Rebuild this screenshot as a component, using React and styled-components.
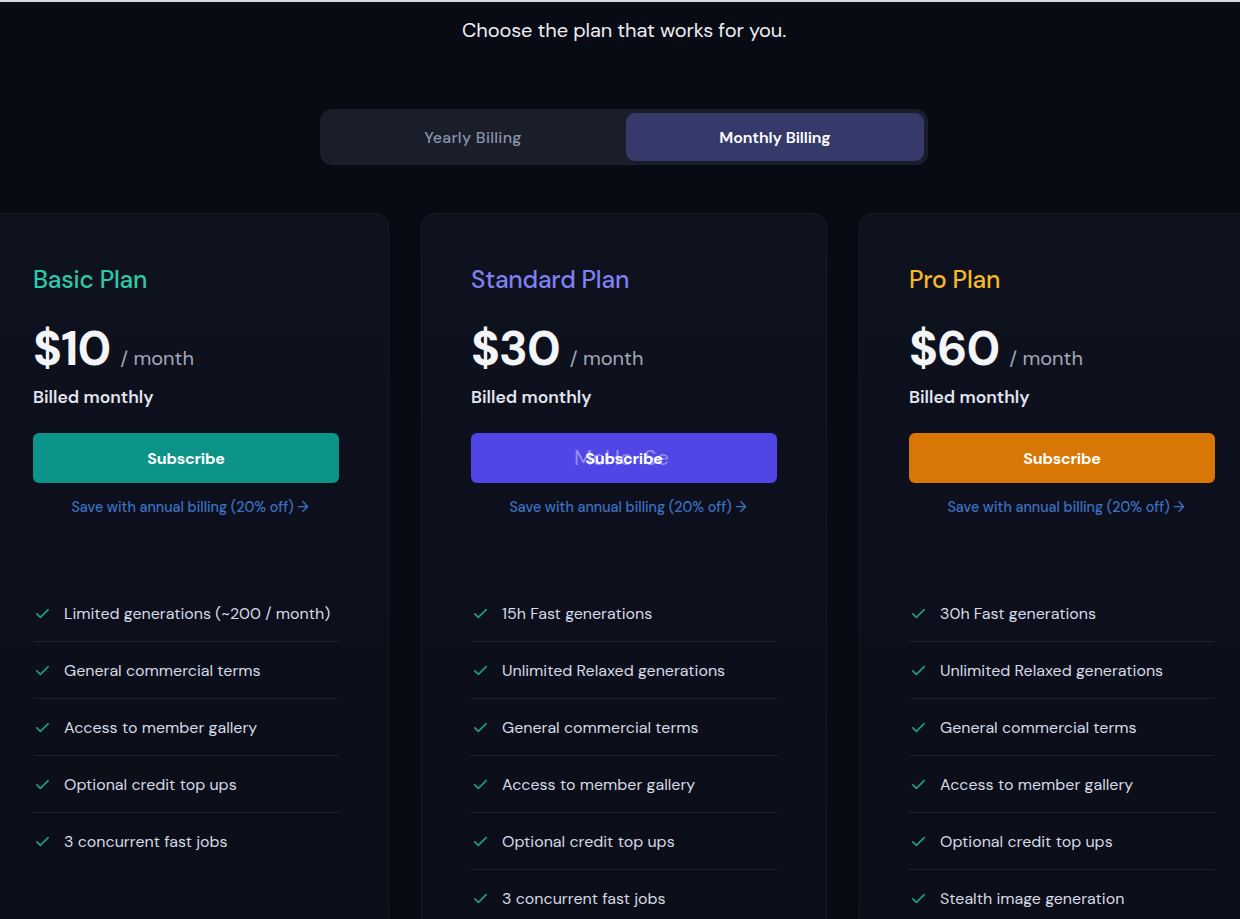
import React from "react";
import styled, { createGlobalStyle } from "styled-components";

const Global = createGlobalStyle`
  html, body { margin: 0; padding: 0; background: #090b14; }
  body { font-family: "DM Sans", Inter, "Noto Sans", sans-serif; overflow: hidden; }
  * { box-sizing: border-box; }
`;

const Page = styled.div`
  width: 1240px;
  height: 919px;
  padding-left: 8px;
  background: #090b14;
  border-top: 2px solid #d9dbe0;
  overflow: hidden;
  display: flex;
  flex-direction: column;
  align-items: center;
  & > * { flex-shrink: 0; }
`;

const Heading = styled.h2`
  margin: 16px 0 0;
  font-size: 20px;
  font-weight: 400;
  color: #eceef4;
  line-height: 24px;
  letter-spacing: -0.1px;
`;

const Toggle = styled.div`
  margin-top: 67px;
  width: 608px;
  height: 56px;
  padding: 4px;
  border-radius: 12px;
  background: #1a1d2a;
  display: grid;
  grid-template-columns: 1fr 1fr;
  gap: 4px;
`;

const ToggleBtn = styled.div`
  border-radius: 9px;
  display: flex;
  align-items: center;
  justify-content: center;
  font-size: 16px;
  font-weight: ${(p) => (p.$active ? 600 : 500)};
  color: ${(p) => (p.$active ? "#ffffff" : "#8b96ac")};
  background: ${(p) => (p.$active ? "#363a6a" : "transparent")};
  letter-spacing: ${(p) => (p.$active ? "-0.1px" : "0.3px")};
`;

const Row = styled.div`
  margin-top: 48px;
  width: 100%;
  display: flex;
  justify-content: center;
  gap: 32px;
`;

const Card = styled.div`
  flex: 0 0 406px;
  height: 760px;
  border-radius: 14px;
  border: 1px solid #161a2a;
  background: linear-gradient(180deg, #0e111e 0%, #0d101c 45%, #0b0e18 100%);
  padding: 50px 49px 0;
  display: flex;
  flex-direction: column;
`;

const Title = styled.h3`
  margin: 1px 0 0;
  font-size: 24.5px;
  font-weight: 500;
  line-height: 30px;
  color: ${(p) => p.$color};
  letter-spacing: -0.2px;
`;

const PriceLine = styled.div`
  margin-top: 29px;
  display: flex;
  align-items: baseline;
  gap: 10px;
  height: 50px;
`;

const Price = styled.span`
  font-size: 48px;
  font-weight: 700;
  color: #f4f5f8;
  letter-spacing: -1px;
  line-height: 50px;
`;

const Per = styled.span`
  font-size: 20px;
  color: #a3a9b9;
`;

const Billed = styled.div`
  margin-top: 11px;
  font-size: 17.5px;
  font-weight: 600;
  color: #e2e5ee;
  line-height: 24px;
`;

const Button = styled.button`
  position: relative;
  margin-top: 24px;
  height: 50px;
  width: 100%;
  border: none;
  border-radius: 6px;
  background: ${(p) => p.$bg};
  color: #ffffff;
  font-family: inherit;
  font-size: 16px;
  font-weight: 700;
  letter-spacing: -0.2px;
  display: flex;
  align-items: center;
  justify-content: center;
`;

const Ghost = styled.span`
  position: absolute;
  left: 103px;
  top: 50%;
  transform: translateY(-52%);
  font-size: 22px;
  font-weight: 400;
  color: rgba(175, 175, 255, 0.7);
  letter-spacing: -0.3px;
  word-spacing: 6px;
`;

const ButtonLabel = styled.span`
  position: relative;
`;

const SaveLink = styled.a`
  margin-top: 16px;
  padding-left: 8px;
  text-align: center;
  font-size: 14.3px;
  font-weight: 500;
  color: #3b70c4;
  text-decoration: none;
  line-height: 16px;
`;

const Features = styled.ul`
  list-style: none;
  margin: 70px 0 0;
  padding: 0;
`;

const Feature = styled.li`
  height: 57px;
  display: flex;
  align-items: center;
  gap: 13px;
  padding-left: 1px;
  font-size: 16px;
  color: #d6dae5;
  border-bottom: 1px solid #1d2030;
  &:last-child { border-bottom: none; }
`;

const Check = () => (
  <svg width="17" height="17" viewBox="0 0 24 24" fill="none" stroke="#1f9c7e" strokeWidth="2.4" strokeLinecap="round" strokeLinejoin="round">
    <path d="M4 12.5l5 5L20 6.5" />
  </svg>
);

const plans = [
  {
    name: "Basic Plan",
    color: "#2ec9a6",
    price: "$10",
    btn: "#0d9488",
    features: [
      "Limited generations (~200 / month)",
      "General commercial terms",
      "Access to member gallery",
      "Optional credit top ups",
      "3 concurrent fast jobs",
    ],
  },
  {
    name: "Standard Plan",
    color: "#7f80f2",
    price: "$30",
    btn: "#4f46e5",
    ghost: "MoHo Se",
    features: [
      "15h Fast generations",
      "Unlimited Relaxed generations",
      "General commercial terms",
      "Access to member gallery",
      "Optional credit top ups",
      "3 concurrent fast jobs",
    ],
  },
  {
    name: "Pro Plan",
    color: "#f7b928",
    price: "$60",
    btn: "#d97706",
    features: [
      "30h Fast generations",
      "Unlimited Relaxed generations",
      "General commercial terms",
      "Access to member gallery",
      "Optional credit top ups",
      "Stealth image generation",
    ],
  },
];

export default function App() {
  return (
    <>
      <Global />
      <Page>
        <Heading>Choose the plan that works for you.</Heading>
        <Toggle>
          <ToggleBtn>Yearly Billing</ToggleBtn>
          <ToggleBtn $active>Monthly Billing</ToggleBtn>
        </Toggle>
        <Row>
          {plans.map((p) => (
            <Card key={p.name}>
              <Title $color={p.color}>{p.name}</Title>
              <PriceLine>
                <Price>{p.price}</Price>
                <Per>/ month</Per>
              </PriceLine>
              <Billed>Billed monthly</Billed>
              <Button $bg={p.btn}>
                {p.ghost && <Ghost>{p.ghost}</Ghost>}
                <ButtonLabel>Subscribe</ButtonLabel>
              </Button>
              <SaveLink href="#">Save with annual billing (20% off) →</SaveLink>
              <Features>
                {p.features.map((f) => (
                  <Feature key={f}>
                    <Check />
                    {f}
                  </Feature>
                ))}
              </Features>
            </Card>
          ))}
        </Row>
      </Page>
    </>
  );
}
